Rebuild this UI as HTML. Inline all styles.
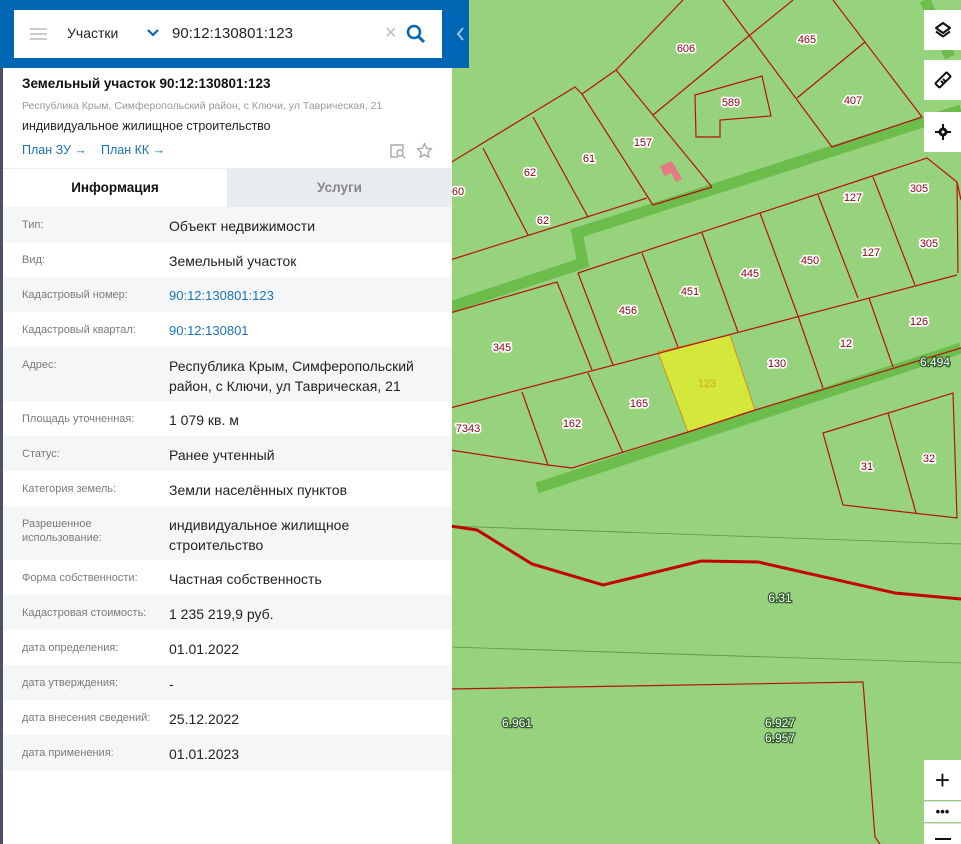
<!DOCTYPE html>
<html><head><meta charset="utf-8"><style>
*{margin:0;padding:0;box-sizing:border-box}
body{width:961px;height:844px;overflow:hidden;position:relative;font-family:"Liberation Sans",sans-serif;background:#96d37c}
#map{position:absolute;left:0;top:0}
.p{position:absolute;left:0;top:0;width:452px;height:844px;background:#fff;border-left:3px solid #4b5264}
.hdr{position:absolute;left:-3px;top:0;width:455px;height:68px;background:#0066b3}
.sb{position:absolute;left:14px;top:10px;width:428px;height:48px;background:#fff}
.tab{position:absolute;left:452px;top:0;width:17px;height:68px;background:#0066b3}
.ctl{position:absolute;left:924px;width:37px;background:#fff;display:flex;align-items:center;justify-content:center}
.row{position:absolute;left:0;width:449px;font-size:14px;color:#222}
.row .l{position:absolute;left:19px;top:11px;font-size:11px;color:#7a7a7a;line-height:14px;width:140px}
.row .v{position:absolute;left:166px;top:9px;line-height:20px;width:270px}
.g{background:#f5f6f8}
a{color:#1a73b8;text-decoration:none}
</style></head><body>
<svg id="map" width="961" height="844" viewBox="0 0 961 844">
<rect width="961" height="844" fill="#96d37c"/>
<g fill="none" stroke="#6cbd4c" stroke-width="11">
<polyline points="450,307 583,263 577,233 923,122 961,110"/>
<polyline points="537,488 961,348"/>
<polyline points="925,0 950,57"/>
</g>
<g fill="none" stroke="#5f9150" stroke-width="0.8">
<polyline points="450,526 961,544"/><polyline points="450,647 961,663"/>
</g>
<polygon points="658,352 730,335 755,410 688,432" fill="#d4e83c" stroke="#d09020" stroke-width="1"/>
<g fill="none" stroke="#b81010" stroke-width="1.2">
<polyline points="450,163 575,87 582,94 616,70 683,0"/>
<polyline points="450,260 647,198"/><polyline points="653,205 712,187"/>
<polyline points="483,148 528,235"/><polyline points="533,117 588,217"/>
<polyline points="582,94 653,205"/><polyline points="616,70 712,187"/>
<polyline points="653,115 750,35 793,0"/><polyline points="723,0 832,147 922,117"/>
<polyline points="833,0 922,117"/><polyline points="797,98 865,42"/>
<polygon points="695,95 762,76 771,116 720,120 720,137 696,137"/>
<polyline points="578,273 927,158 957,182 961,200"/>
<polyline points="450,313 557,282 592,370"/><polyline points="578,273 613,365"/>
<polyline points="450,408 957,275"/>
<polyline points="450,450 548,465 572,468 688,432 755,410 961,348"/>
<polyline points="642,253 678,347"/><polyline points="702,233 738,332"/>
<polyline points="760,213 798,316 823,388"/><polyline points="818,195 858,298"/>
<polyline points="873,177 915,285"/><polyline points="869,298 893,367"/>
<polyline points="957,182 958,273"/>
<polyline points="522,392 548,465"/><polyline points="588,373 623,453"/>
<polygon points="823,433 953,393 957,518 843,505"/><polyline points="888,413 916,513"/>
<polyline points="450,689 863,682 875,837 880,844"/>
</g>
<polyline points="450,526 477,530 532,564 603,585 701,561 758,562 895,593 961,599" fill="none" stroke="#c40000" stroke-width="3"/>
<path d="M660,166 L672,161 L682,179 L676,182 L671,173 L664,176Z" fill="#e47a86"/>
<g font-size="11" fill="#8b0010" stroke="#fff" stroke-width="3.5" paint-order="stroke" stroke-linejoin="round" text-anchor="middle">
<text x="686" y="52">606</text><text x="807" y="43">465</text><text x="731" y="106">589</text><text x="853" y="104">407</text>
<text x="643" y="146">157</text><text x="589" y="162">61</text><text x="530" y="176">62</text><text x="458" y="195">60</text>
<text x="543" y="224">62</text><text x="919" y="192">305</text><text x="853" y="201">127</text><text x="929" y="247">305</text>
<text x="871" y="256">127</text><text x="810" y="264">450</text><text x="750" y="277">445</text><text x="690" y="295">451</text>
<text x="628" y="314">456</text><text x="502" y="351">345</text><text x="846" y="347">12</text><text x="919" y="325">126</text>
<text x="777" y="367">130</text><text x="639" y="407">165</text><text x="572" y="427">162</text><text x="468" y="432">7343</text>
<text x="867" y="470">31</text><text x="929" y="462">32</text>
</g>
<text x="707" y="387" font-size="11" fill="#e0d020" stroke="#c8a020" stroke-width="0.3" text-anchor="middle">123</text>
<g font-size="12" fill="#fff" stroke="#2f5a2a" stroke-width="2.5" paint-order="stroke" text-anchor="middle">
<text x="780" y="602">6.31</text><text x="517" y="727">6.961</text><text x="780" y="727">6.927</text><text x="780" y="742">6.957</text><text x="935" y="366">6.494</text>
</g>
</svg>
<div class="tab"><svg width="17" height="68"><polyline points="11,28 6,34 11,40" fill="none" stroke="#9cc4e6" stroke-width="2"/></svg></div>
<div class="ctl" style="top:10px;height:40px"><svg width="20" height="20" viewBox="0 0 20 20" fill="none" stroke="#111" stroke-width="2" stroke-linejoin="round"><path d="M10 3 L17 8 L10 13 L3 8Z"/><path d="M3 11.5 L10 16.5 L17 11.5"/></svg></div>
<div class="ctl" style="top:60px;height:40px"><svg width="20" height="20" viewBox="0 0 20 20" fill="none" stroke="#111" stroke-width="2"><rect x="2" y="7" width="16" height="6" rx="1" transform="rotate(-45 10 10)"/><path d="M8 11 l2 2 M10 9 l2 2"/></svg></div>
<div class="ctl" style="top:112px;height:40px"><svg width="20" height="20" viewBox="0 0 20 20"><path d="M10 2v16M2 10h16" stroke="#111" stroke-width="2"/><circle cx="10" cy="10" r="4.5" fill="#111"/><circle cx="10" cy="10" r="1.5" fill="#fff"/></svg></div>
<div class="ctl" style="top:760px;height:40px;font-size:26px;color:#111">+</div>
<div class="ctl" style="top:801px;height:21px;border-top:1px solid #ddd;font-size:13px;font-weight:bold;color:#111;line-height:8px">•••</div>
<div class="ctl" style="top:823px;height:21px;border-top:1px solid #ddd"><div style="width:16px;height:2px;background:#111;margin-top:10px"></div></div>
<div class="p">
<div class="hdr"><div class="sb">
<div style="position:absolute;left:16px;top:18px;width:17px;height:2px;background:#ccc;box-shadow:0 5px 0 #ccc,0 10px 0 #ccc"></div>
<div style="position:absolute;left:53px;top:15px;font-size:14px;color:#222">Участки</div>
<svg style="position:absolute;left:133px;top:19px" width="12" height="8"><polyline points="1,1 6,6 11,1" fill="none" stroke="#0a66b0" stroke-width="2.2"/></svg>
<div style="position:absolute;left:158px;top:15px;font-size:15px;color:#222">90:12:130801:123</div>
<div style="position:absolute;left:371px;top:12px;font-size:20px;color:#bbb">×</div>
<svg style="position:absolute;left:392px;top:14px" width="20" height="20"><circle cx="8" cy="8" r="6" fill="none" stroke="#0a66b0" stroke-width="2.5"/><path d="M12.5 12.5 L18 18" stroke="#0a66b0" stroke-width="3"/></svg>
</div></div>
<div style="position:absolute;left:19px;top:76px;font-size:13.5px;font-weight:bold;color:#111">Земельный участок 90:12:130801:123</div>
<div style="position:absolute;left:19px;top:100px;font-size:10.5px;color:#999">Республика Крым, Симферопольский район, с Ключи, ул Таврическая, 21</div>
<div style="position:absolute;left:19px;top:119px;font-size:12.5px;color:#222">индивидуальное жилищное строительство</div>
<div style="position:absolute;left:19px;top:143px;font-size:12.5px;color:#1a73b8">План ЗУ →</div>
<div style="position:absolute;left:98px;top:143px;font-size:12.5px;color:#1a73b8">План КК →</div>
<svg style="position:absolute;left:386px;top:143px" width="18" height="16" fill="none" stroke="#aaa" stroke-width="1.5"><path d="M9 14H2V2h12v5"/><circle cx="11" cy="10" r="3"/><path d="M13 12l3 3"/></svg>
<svg style="position:absolute;left:413px;top:142px" width="17" height="17" viewBox="0 0 24 24" fill="none" stroke="#aaa" stroke-width="2" stroke-linejoin="round"><path d="M12 2l3 7 7 .6-5.3 4.7 1.6 7.2L12 17.8 5.7 21.5l1.6-7.2L2 9.6 9 9z"/></svg>
<div style="position:absolute;left:0;top:168px;width:224px;height:39px;border-top:1px solid #eee;font-size:13.5px;font-weight:bold;color:#111;text-align:center;line-height:38px">Информация</div>
<div style="position:absolute;left:224px;top:168px;width:225px;height:39px;background:#e8ebef;font-size:13.5px;font-weight:bold;color:#888;text-align:center;line-height:39px">Услуги</div>
<div class="row g" style="top:207px;height:35px"><div class="l">Тип:</div><div class="v">Объект недвижимости</div></div>
<div class="row" style="top:242px;height:35px"><div class="l">Вид:</div><div class="v">Земельный участок</div></div>
<div class="row g" style="top:277px;height:35px"><div class="l">Кадастровый номер:</div><div class="v" style="font-size:13px"><a>90:12:130801:123</a></div></div>
<div class="row" style="top:312px;height:35px"><div class="l">Кадастровый квартал:</div><div class="v" style="font-size:13px"><a>90:12:130801</a></div></div>
<div class="row g" style="top:347px;height:54px"><div class="l">Адрес:</div><div class="v">Республика Крым, Симферопольский район, с Ключи, ул Таврическая, 21</div></div>
<div class="row" style="top:401px;height:35px"><div class="l">Площадь уточненная:</div><div class="v">1 079 кв. м</div></div>
<div class="row g" style="top:436px;height:35px"><div class="l">Статус:</div><div class="v">Ранее учтенный</div></div>
<div class="row" style="top:471px;height:35px"><div class="l">Категория земель:</div><div class="v">Земли населённых пунктов</div></div>
<div class="row g" style="top:506px;height:54px"><div class="l">Разрешенное использование:</div><div class="v">индивидуальное жилищное строительство</div></div>
<div class="row" style="top:560px;height:35px"><div class="l">Форма собственности:</div><div class="v">Частная собственность</div></div>
<div class="row g" style="top:595px;height:35px"><div class="l">Кадастровая стоимость:</div><div class="v">1 235 219,9 руб.</div></div>
<div class="row" style="top:630px;height:35px"><div class="l">дата определения:</div><div class="v">01.01.2022</div></div>
<div class="row g" style="top:665px;height:35px"><div class="l">дата утверждения:</div><div class="v">-</div></div>
<div class="row" style="top:700px;height:35px"><div class="l">дата внесения сведений:</div><div class="v">25.12.2022</div></div>
<div class="row g" style="top:735px;height:35px"><div class="l">дата применения:</div><div class="v">01.01.2023</div></div>
</div>
</body></html>
